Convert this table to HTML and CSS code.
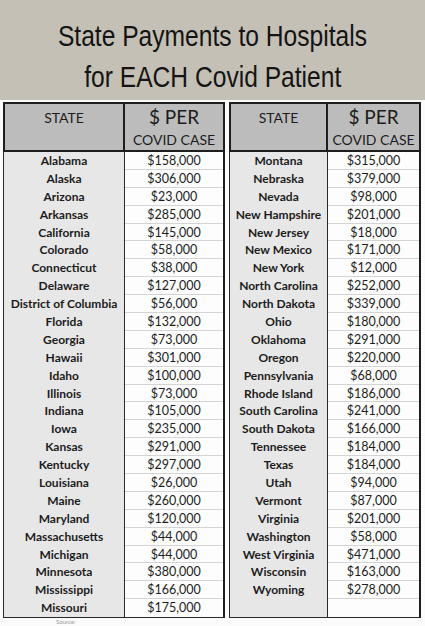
FILE: index.html
```html
<!DOCTYPE html>
<html>
<head>
<meta charset="utf-8">
<link rel="stylesheet" href="styles.css">
</head>
<body>
<div class="page">
  <header class="title">
    <div class="title-line"><span class="title-text">State Payments to Hospitals</span></div>
    <div class="title-line"><span class="title-text">for EACH Covid Patient</span></div>
  </header>
  <div class="tables">
    <div class="tbl tbl-left">
      <div class="head">
        <div class="h-state">STATE</div>
        <div class="h-val"><span class="h-big">$ PER</span><span class="h-small">COVID CASE</span></div>
      </div>
      <div class="body">
        <div class="col-state">
          <div class="c">Alabama</div><div class="c">Alaska</div><div class="c">Arizona</div><div class="c">Arkansas</div><div class="c">California</div><div class="c">Colorado</div><div class="c">Connecticut</div><div class="c">Delaware</div><div class="c">District of Columbia</div><div class="c">Florida</div><div class="c">Georgia</div><div class="c">Hawaii</div><div class="c">Idaho</div><div class="c">Illinois</div><div class="c">Indiana</div><div class="c">Iowa</div><div class="c">Kansas</div><div class="c">Kentucky</div><div class="c">Louisiana</div><div class="c">Maine</div><div class="c">Maryland</div><div class="c">Massachusetts</div><div class="c">Michigan</div><div class="c">Minnesota</div><div class="c">Mississippi</div><div class="c">Missouri</div>
        </div>
        <div class="col-val">
          <div class="c">$158,000</div><div class="c">$306,000</div><div class="c">$23,000</div><div class="c">$285,000</div><div class="c">$145,000</div><div class="c">$58,000</div><div class="c">$38,000</div><div class="c">$127,000</div><div class="c">$56,000</div><div class="c">$132,000</div><div class="c">$73,000</div><div class="c">$301,000</div><div class="c">$100,000</div><div class="c">$73,000</div><div class="c">$105,000</div><div class="c">$235,000</div><div class="c">$291,000</div><div class="c">$297,000</div><div class="c">$26,000</div><div class="c">$260,000</div><div class="c">$120,000</div><div class="c">$44,000</div><div class="c">$44,000</div><div class="c">$380,000</div><div class="c">$166,000</div><div class="c">$175,000</div>
        </div>
      </div>
    </div>
    <div class="tbl tbl-right">
      <div class="head">
        <div class="h-state">STATE</div>
        <div class="h-val"><span class="h-big">$ PER</span><span class="h-small">COVID CASE</span></div>
      </div>
      <div class="body">
        <div class="col-state">
          <div class="c">Montana</div><div class="c">Nebraska</div><div class="c">Nevada</div><div class="c">New Hampshire</div><div class="c">New Jersey</div><div class="c">New Mexico</div><div class="c">New York</div><div class="c">North Carolina</div><div class="c">North Dakota</div><div class="c">Ohio</div><div class="c">Oklahoma</div><div class="c">Oregon</div><div class="c">Pennsylvania</div><div class="c">Rhode Island</div><div class="c">South Carolina</div><div class="c">South Dakota</div><div class="c">Tennessee</div><div class="c">Texas</div><div class="c">Utah</div><div class="c">Vermont</div><div class="c">Virginia</div><div class="c">Washington</div><div class="c">West Virginia</div><div class="c">Wisconsin</div><div class="c">Wyoming</div><div class="c"></div>
        </div>
        <div class="col-val">
          <div class="c">$315,000</div><div class="c">$379,000</div><div class="c">$98,000</div><div class="c">$201,000</div><div class="c">$18,000</div><div class="c">$171,000</div><div class="c">$12,000</div><div class="c">$252,000</div><div class="c">$339,000</div><div class="c">$180,000</div><div class="c">$291,000</div><div class="c">$220,000</div><div class="c">$68,000</div><div class="c">$186,000</div><div class="c">$241,000</div><div class="c">$166,000</div><div class="c">$184,000</div><div class="c">$184,000</div><div class="c">$94,000</div><div class="c">$87,000</div><div class="c">$201,000</div><div class="c">$58,000</div><div class="c">$471,000</div><div class="c">$163,000</div><div class="c">$278,000</div><div class="c"></div>
        </div>
      </div>
    </div>
  </div>
  <div class="source">Source:</div>
</div>
</body>
</html>
```

FILE: styles.css
```css
* { box-sizing: border-box; }
html, body { margin: 0; padding: 0; background: #fbfbfb; }
.page { width: 425px; height: 626px; overflow: hidden; font-family: Lato, "Open Sans", sans-serif; color: #1c1c1c; }
.title {
  background: #c4c0b5;
  height: 100px;
  padding-top: 15px;
  text-align: center;
  font-family: "Liberation Sans", Arial, sans-serif;
  font-size: 30px;
  line-height: 41px;
  color: #141414;
}
.title-line { height: 41px; white-space: nowrap; }
.title-text { display: inline-block; transform: scaleX(0.82); }
.tables { display: flex; gap: 4px; padding: 2px 0 0 3px; }
.tbl { display: flex; flex-direction: column; }
.tbl-left { width: 222px; }
.tbl-right { width: 192px; }
.head { display: flex; height: 50px; }
.h-state, .h-val {
  background: #bcbcbc;
  border: 2px solid #1e1e1e;
  display: flex; flex-direction: column; align-items: center;
}
.h-val { border-left: none; flex: 1; }
.tbl-left .h-state { width: 122px; }
.tbl-right .h-state { width: 99px; }
.h-state { font-size: 14px; padding-top: 7px; line-height: 14px; }
.h-big { font-size: 19px; line-height: 20px; padding-top: 3px; }
.h-small { font-size: 14px; line-height: 16px; padding-top: 5px; }
.body { display: flex; border-left: 1px solid #2a2a2a; border-right: 2px solid #1e1e1e; border-bottom: 1px solid #2a2a2a; }
.col-state { background: #e7e7e7; border-right: 1px solid #2a2a2a; }
.tbl-left .col-state { width: 121px; }
.tbl-right .col-state { width: 98px; }
.col-val { flex: 1; background: #fdfdfd; }
.c { height: 17.9px; line-height: 17.9px; text-align: center; white-space: nowrap; }
.col-state .c { font-weight: 700; font-size: 12px; }
.col-val .c { font-size: 12.5px; border-bottom: 1px solid #d4d4d4; line-height: 17.5px; }
.col-val .c:last-child { border-bottom: none; }
.source { font-size: 6px; color: #999; padding-left: 56px; line-height: 8px; }
```
